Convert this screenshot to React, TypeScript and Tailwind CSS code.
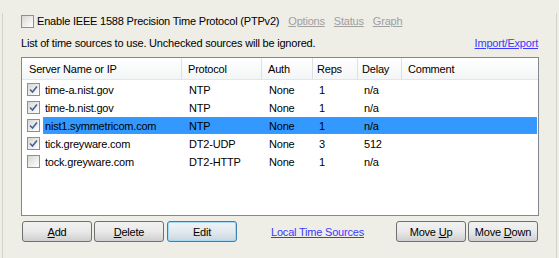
import React from 'react';

interface Source {
  name: string;
  protocol: string;
  auth: string;
  reps: string;
  delay: string;
  checked: boolean;
  selected?: boolean;
}

const sources: Source[] = [
  { name: 'time-a.nist.gov', protocol: 'NTP', auth: 'None', reps: '1', delay: 'n/a', checked: true },
  { name: 'time-b.nist.gov', protocol: 'NTP', auth: 'None', reps: '1', delay: 'n/a', checked: true },
  { name: 'nist1.symmetricom.com', protocol: 'NTP', auth: 'None', reps: '1', delay: 'n/a', checked: true, selected: true },
  { name: 'tick.greyware.com', protocol: 'DT2-UDP', auth: 'None', reps: '3', delay: '512', checked: true },
  { name: 'tock.greyware.com', protocol: 'DT2-HTTP', auth: 'None', reps: '1', delay: 'n/a', checked: false },
];

function CheckBox({ checked }: { checked: boolean }) {
  return (
    <div className="w-[13px] h-[13px] border border-[#8e8f8f] bg-gradient-to-br from-[#d8d8d2] to-white flex items-center justify-center shrink-0">
      {checked && (
        <svg width="9" height="9" viewBox="0 0 9 9">
          <path d="M1 4.5 L3.5 7 L8 1.5" stroke="#4a5f97" strokeWidth="1.6" fill="none" />
        </svg>
      )}
    </div>
  );
}

function Button({ label, u, focused }: { label: [string, string, string]; u?: boolean; focused?: boolean }) {
  return (
    <div
      className={`w-[70px] h-[21px] rounded-[3px] border flex items-center justify-center text-black ${
        focused
          ? 'border-[#3c7fb1] bg-gradient-to-b from-[#eef3f6] via-[#e2eaef] to-[#c9d6de] shadow-[inset_0_0_0_1px_#a7d9f5]'
          : 'border-[#707070] bg-gradient-to-b from-[#f2f2f2] via-[#e9e9e9] to-[#cfcfcf]'
      }`}
    >
      <span>
        {label[0]}
        {u ? <span className="underline">{label[1]}</span> : label[1]}
        {label[2]}
      </span>
    </div>
  );
}

export default function App() {
  return (
    <div
      className="w-[559px] h-[258px] overflow-hidden bg-[#eeede6] text-[11px] tracking-[-0.2px] leading-[14px] text-black"
      style={{ fontFamily: '"Liberation Sans", Arial, sans-serif' }}
    >
      <div className="ml-[2px] w-[555px] h-[255px] border-l border-r border-b border-[#d5d4cb] rounded-b-[3px] pl-[18px] pr-[18px]">
        <div className="flex items-center h-[16px] mt-[13px]">
          <CheckBox checked={false} />
          <span className="ml-[3px]">Enable IEEE 1588 Precision Time Protocol (PTPv2)</span>
          <span className="ml-[9px] text-[#a0a0a0] underline">Options</span>
          <span className="ml-[9px] text-[#a0a0a0] underline">Status</span>
          <span className="ml-[9px] text-[#a0a0a0] underline">Graph</span>
        </div>
        <div className="flex items-center justify-between h-[14px] mt-[7px]">
          <span>List of time sources to use. Unchecked sources will be ignored.</span>
          <span className="text-[#3a3aff] underline">Import/Export</span>
        </div>
        <div className="mt-[7px] w-[518px] h-[159px] border border-[#828790] bg-white">
          <div className="flex h-[22px] items-center bg-gradient-to-b from-white to-[#f4f5f6] border-b border-[#e5e5e5]">
            <div className="w-[160px] pl-[7px] h-full flex items-center border-r border-[#e0e0e0]">Server Name or IP</div>
            <div className="w-[80px] pl-[6px] h-full flex items-center border-r border-[#e0e0e0]">Protocol</div>
            <div className="w-[51px] pl-[6px] h-full flex items-center border-r border-[#e0e0e0]">Auth</div>
            <div className="w-[45px] pl-[4px] h-full flex items-center border-r border-[#e0e0e0]">Reps</div>
            <div className="w-[44px] pl-[4px] h-full flex items-center border-r border-[#e0e0e0]">Delay</div>
            <div className="flex-1 pl-[6px] h-full flex items-center">Comment</div>
          </div>
          <div>
            {sources.map((s) => (
              <div key={s.name} className="flex h-[18px]">
                <div className="w-[21px] shrink-0 flex items-center pl-[5px]">
                  <CheckBox checked={s.checked} />
                </div>
                <div
                  className={`flex flex-1 h-[17px] mt-[1px] items-center mr-[1px] ${
                    s.selected ? 'bg-[#3399ff] outline outline-1 outline-dotted outline-[#c08040] -outline-offset-1' : ''
                  }`}
                >
                  <div className="w-[140px] pl-[2px]">{s.name}</div>
                  <div className="w-[80px] pl-[6px]">{s.protocol}</div>
                  <div className="w-[51px] pl-[6px]">{s.auth}</div>
                  <div className="w-[45px] pl-[5px]">{s.reps}</div>
                  <div className="w-[44px] pl-[5px]">{s.delay}</div>
                  <div className="flex-1" />
                </div>
              </div>
            ))}
          </div>
        </div>
        <div className="flex items-center mt-[5px] h-[21px] ml-[1px]">
          <Button label={['', 'A', 'dd']} u />
          <div className="ml-[2px]">
            <Button label={['', 'D', 'elete']} u />
          </div>
          <div className="ml-[3px]">
            <Button label={['Edit', '', '']} focused />
          </div>
          <span className="ml-[34px] text-[#3a3aff] underline">Local Time Sources</span>
          <div className="flex-1" />
          <Button label={['Move ', 'U', 'p']} u />
          <div className="ml-[2px] mr-[0px]">
            <Button label={['Move ', 'D', 'own']} u />
          </div>
        </div>
      </div>
    </div>
  );
}
